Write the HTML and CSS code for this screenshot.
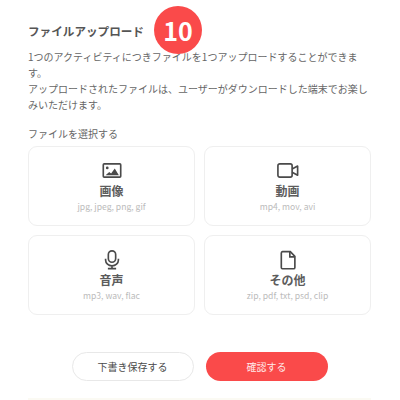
FILE: index.html
```html
<!DOCTYPE html>
<html lang="ja">
<head>
<meta charset="utf-8">
<title>ファイルアップロード</title>
<link rel="stylesheet" href="styles.css">
</head>
<body>
<main class="page">
  <div class="badge">10</div>
  <h1 class="title">ファイルアップロード</h1>
  <p class="desc">1つのアクティビティにつきファイルを1つアップロードすることができます。<br>アップロードされたファイルは、ユーザーがダウンロードした端末でお楽しみいただけます。</p>
  <p class="label">ファイルを選択する</p>
  <div class="grid">
    <div class="card">
      <svg class="icon" viewBox="0 0 24 24"><rect x="2.500" y="3.100" width="19" height="14.500" rx="1" fill="none" stroke="#4a4a4a" stroke-width="1.800"/><circle cx="6.800" cy="7.500" r="1.500" fill="#4a4a4a"/><path d="M5 15.500l4-3.500 2 1.500L15 8.200l4.500 7.300z" fill="#4a4a4a"/></svg>
      <div class="name">画像</div>
      <div class="ext">jpg, jpeg, png, gif</div>
    </div>
    <div class="card">
      <svg class="icon" viewBox="0 0 24 24"><rect x="1" y="3.100" width="15.500" height="14.500" rx="2" fill="none" stroke="#4a4a4a" stroke-width="1.800"/><path d="M16.500 8.800l6-3.300v10l-6-3.300" fill="none" stroke="#4a4a4a" stroke-width="1.800" stroke-linejoin="round"/></svg>
      <div class="name">動画</div>
      <div class="ext">mp4, mov, avi</div>
    </div>
    <div class="card">
      <svg class="icon" viewBox="0 0 24 24"><rect x="8" y="0.900" width="8" height="12.500" rx="4" fill="none" stroke="#4a4a4a" stroke-width="1.800"/><path d="M5 9.500v1.500a7 6.300 0 0 0 14 0v-1.500M12 17.300v3M7.500 20.300h9" fill="none" stroke="#4a4a4a" stroke-width="1.800"/></svg>
      <div class="name">音声</div>
      <div class="ext">mp3, wav, flac</div>
    </div>
    <div class="card">
      <svg class="icon" viewBox="0 0 24 24"><path d="M6 1.800h8.500l5 5.200v12a1.500 1.500 0 0 1-1.500 1.500H6A1.500 1.500 0 0 1 4.700 19V3.200A1.500 1.500 0 0 1 6 1.800z" fill="none" stroke="#4a4a4a" stroke-width="1.800"/><path d="M14 2.200v5.300h5" fill="none" stroke="#4a4a4a" stroke-width="1.800"/></svg>
      <div class="name">その他</div>
      <div class="ext">zip, pdf, txt, psd, clip</div>
    </div>
  </div>
  <div class="actions">
    <button class="btn btn-draft">下書き保存する</button>
    <button class="btn btn-confirm">確認する</button>
  </div>
  <div class="rule"></div>
</main>
</body>
</html>
```
FILE: styles.css
```css
* { box-sizing: border-box; }
html, body { margin: 0; height: 400px; overflow: hidden; background: #fff; }
body { font-family: "Noto Sans CJK JP", "Noto Sans", sans-serif; color: #4a4a4a; }
.page { position: relative; padding: 23px 29px 0 28px; }
.badge {
  position: absolute; left: 154px; top: 6px; width: 48px; height: 48px;
  border-radius: 50%; background: #fa4a4a; color: #fff;
  font: 700 25px/48px "Noto Sans CJK JP", sans-serif; text-align: center;
}
.title { margin: 0; font-size: 11.600px; line-height: 16px; font-weight: 700; color: #555; }
.desc { margin: 10px 0 0; font-size: 10px; line-height: 16px; color: #666; }
.label { margin: 13px 0 0; font-size: 10px; line-height: 16px; color: #666; }
.grid { margin-top: 4px; display: grid; grid-template-columns: 167px 167px; grid-auto-rows: 80px; column-gap: 9px; row-gap: 9px; }
.card {
  border: 1px solid #efefef; border-radius: 9px; background: #fff;
  display: flex; flex-direction: column; align-items: center; padding-top: 14px;
}
.icon { width: 22px; height: 22px; display: block; }
.name { font-size: 12px; line-height: 16px; font-weight: 700; color: #5c5c5c; }
.ext { margin-top: 1px; font-size: 8.600px; line-height: 12px; color: #bbb; }
.actions { margin-top: 37px; display: flex; justify-content: center; gap: 12px; }
.btn {
  width: 122px; height: 29px; border-radius: 15px; padding: 0;
  font-family: inherit; font-size: 10px; line-height: 16px;
}
.btn-draft { background: #fff; border: 1px solid #e8e8e8; color: #4a4a4a; }
.btn-confirm { background: #fa4a4a; border: 0; color: #ffe9e9; }
.rule { margin-top: 17px; height: 2px; background: #fbfaf3; }
```
